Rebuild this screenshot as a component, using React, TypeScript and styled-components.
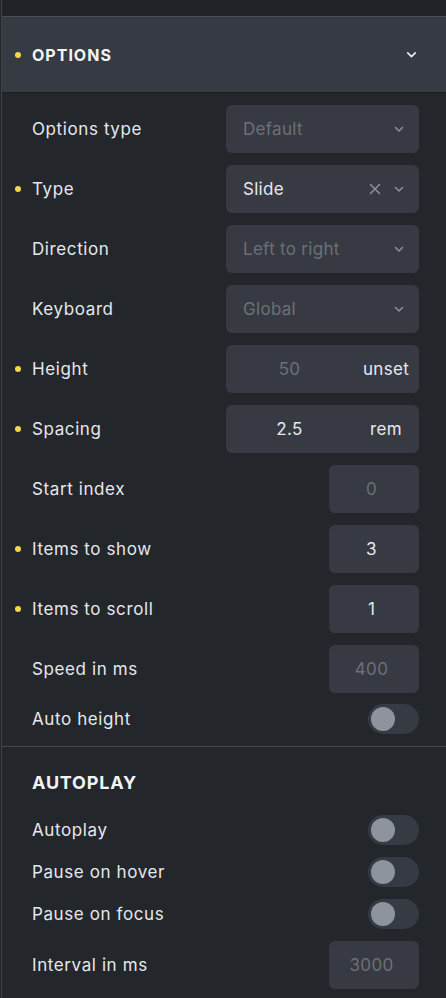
import React from 'react';
import styled, { createGlobalStyle } from 'styled-components';

const GlobalStyle = createGlobalStyle`
  html, body { margin: 0; padding: 0; background: #23262b; }
  body { font-family: Inter, "Noto Sans", sans-serif; -webkit-font-smoothing: antialiased; }
`;

const Panel = styled.div`
  width: 445px;
  height: 998px;
  overflow: hidden;
  background: #23262b;
  border-left: 1px solid #3b3f46;
  margin-left: 1px;
  box-sizing: border-box;
  color: #e8eaed;
`;

const TopStrip = styled.div`
  height: 16px;
  background: #1f2227;
  border-bottom: 1px solid #4a4e56;
`;

const SectionHeader = styled.div`
  height: 75px;
  background: #363a42;
  border-bottom: 1px solid #1c1e22;
  display: flex;
  align-items: center;
  padding: 0 28px 0 30px;
  position: relative;
`;

const HeaderTitle = styled.div`
  flex: 1;
  font-size: 16px;
  font-weight: 700;
  letter-spacing: 1px;
  text-transform: uppercase;
  color: #f2f3f5;
`;

const Dot = styled.span<{ $left?: number }>`
  position: absolute;
  left: ${p => p.$left ?? 13}px;
  top: 50%;
  width: 6px;
  height: 6px;
  margin-top: -3px;
  border-radius: 50%;
  background: #f6d54a;
`;

const Rows = styled.div<{ $top?: number }>`
  padding: ${p => p.$top ?? 12}px 27px 0 30px;
  display: flex;
  flex-direction: column;
  gap: 12px;
`;

const Row = styled.div<{ $h?: number }>`
  position: relative;
  display: flex;
  align-items: center;
  justify-content: space-between;
  height: ${p => p.$h ?? 48}px;
`;

const Label = styled.div`
  font-size: 17px;
  letter-spacing: 0.6px;
  color: #e6e8eb;
`;

const Field = styled.div<{ $w: number }>`
  width: ${p => p.$w}px;
  height: 48px;
  box-sizing: border-box;
  background: #373a42;
  border-radius: 6px;
  display: flex;
  align-items: center;
  font-size: 17px;
  letter-spacing: 0.3px;
  color: #e6e8eb;
`;

const SelectText = styled.div<{ $muted?: boolean }>`
  flex: 1;
  padding-left: 17px;
  color: ${p => (p.$muted ? '#6c7078' : '#e6e8eb')};
`;

const Icons = styled.div`
  display: flex;
  align-items: center;
  gap: 12px;
  padding-right: 14px;
  color: #8c9098;
`;

const NumberValue = styled.div<{ $muted?: boolean; $pr?: number }>`
  flex: 1;
  text-align: center;
  padding-right: ${p => p.$pr ?? 0}px;
  color: ${p => (p.$muted ? '#6c7078' : '#e6e8eb')};
`;

const Unit = styled.div`
  width: 66px;
  text-align: center;
  color: #e6e8eb;
`;

const Toggle = styled.div`
  width: 51px;
  height: 30px;
  flex-shrink: 0;
  border-radius: 15px;
  background: #363a42;
  box-sizing: border-box;
  padding: 3px;
  display: flex;
  align-items: center;
`;

const Knob = styled.div`
  width: 24px;
  height: 24px;
  border-radius: 50%;
  background: #8e949d;
`;

const Divider = styled.div`
  height: 1px;
  background: #444850;
  margin-top: 13px;
`;

const SubHeading = styled.div`
  padding: 25px 0 0 30px;
  font-size: 18px;
  font-weight: 700;
  letter-spacing: 0.8px;
  color: #f2f3f5;
`;

const Chevron = ({ color = '#8c9098', size = 12 }: { color?: string; size?: number }) => (
  <svg width={size} height={size} viewBox="0 0 12 12" fill="none">
    <path d="M2.5 4.5 6 8l3.5-3.5" stroke={color} strokeWidth="1.5" strokeLinecap="round" strokeLinejoin="round" />
  </svg>
);

const Cross = () => (
  <svg width="12" height="12" viewBox="0 0 12 12" fill="none">
    <path d="M1.5 1.5l9 9M10.5 1.5l-9 9" stroke="#8c9098" strokeWidth="1.5" strokeLinecap="round" />
  </svg>
);

type Item =
  | { kind: 'select'; label: string; value: string; muted?: boolean; clear?: boolean; dot?: boolean }
  | { kind: 'unit'; label: string; value: string; unit: string; muted?: boolean; dot?: boolean }
  | { kind: 'number'; label: string; value: string; muted?: boolean; dot?: boolean }
  | { kind: 'toggle'; label: string; dot?: boolean; h?: number };

const options: Item[] = [
  { kind: 'select', label: 'Options type', value: 'Default', muted: true },
  { kind: 'select', label: 'Type', value: 'Slide', clear: true, dot: true },
  { kind: 'select', label: 'Direction', value: 'Left to right', muted: true },
  { kind: 'select', label: 'Keyboard', value: 'Global', muted: true },
  { kind: 'unit', label: 'Height', value: '50', unit: 'unset', muted: true, dot: true },
  { kind: 'unit', label: 'Spacing', value: '2.5', unit: 'rem', dot: true },
  { kind: 'number', label: 'Start index', value: '0', muted: true },
  { kind: 'number', label: 'Items to show', value: '3', dot: true },
  { kind: 'number', label: 'Items to scroll', value: '1', dot: true },
  { kind: 'number', label: 'Speed in ms', value: '400', muted: true },
  { kind: 'toggle', label: 'Auto height', h: 28 },
];

const autoplay: Item[] = [
  { kind: 'toggle', label: 'Autoplay', h: 30 },
  { kind: 'toggle', label: 'Pause on hover', h: 30 },
  { kind: 'toggle', label: 'Pause on focus', h: 30 },
  { kind: 'number', label: 'Interval in ms', value: '3000', muted: true },
];

const Control = ({ item }: { item: Item }) => {
  switch (item.kind) {
    case 'select':
      return (
        <Field $w={193}>
          <SelectText $muted={item.muted}>{item.value}</SelectText>
          <Icons>
            {item.clear && <Cross />}
            <Chevron />
          </Icons>
        </Field>
      );
    case 'unit':
      return (
        <Field $w={193}>
          <NumberValue $muted={item.muted}>{item.value}</NumberValue>
          <Unit>{item.unit}</Unit>
        </Field>
      );
    case 'number':
      return (
        <Field $w={90}>
          <NumberValue $muted={item.muted} $pr={5}>{item.value}</NumberValue>
        </Field>
      );
    default:
      return (
        <Toggle>
          <Knob />
        </Toggle>
      );
  }
};

const renderRow = (item: Item) => (
  <Row key={item.label} $h={item.kind === 'toggle' ? item.h : 48}>
    {item.dot && <Dot $left={-17} />}
    <Label>{item.label}</Label>
    <Control item={item} />
  </Row>
);

export default function App() {
  return (
    <>
      <GlobalStyle />
      <Panel>
        <TopStrip />
        <SectionHeader>
          <Dot />
          <HeaderTitle>Options</HeaderTitle>
          <Chevron color="#e8eaed" size={13} />
        </SectionHeader>
        <Rows>{options.map(renderRow)}</Rows>
        <Divider />
        <SubHeading>AUTOPLAY</SubHeading>
        <Rows $top={22}>{autoplay.map(renderRow)}</Rows>
      </Panel>
    </>
  );
}
